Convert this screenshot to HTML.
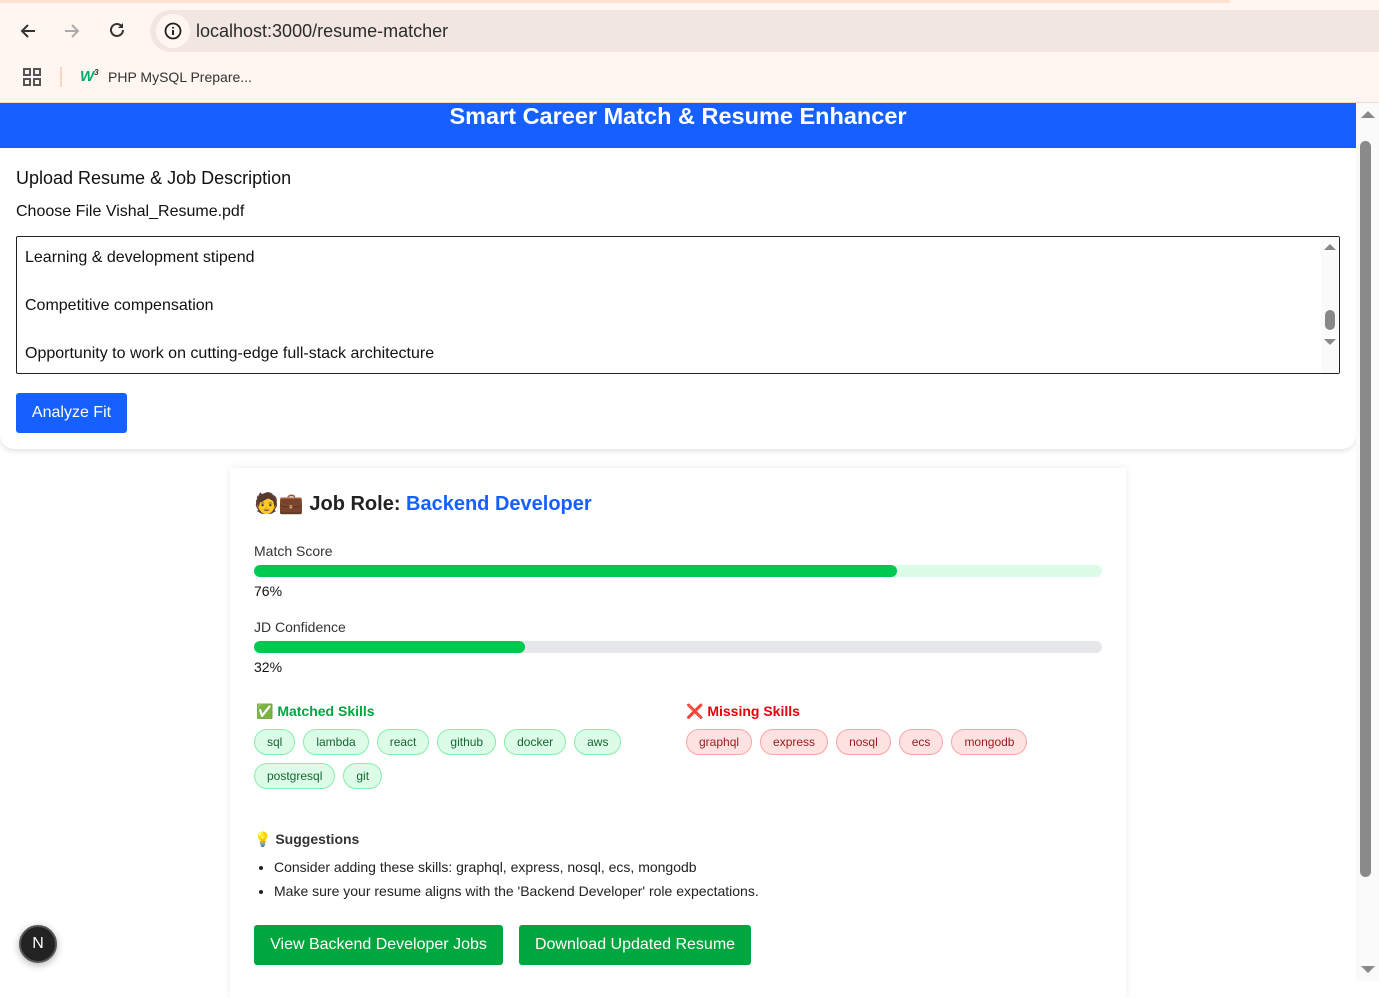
<!DOCTYPE html>
<html><head><style>
*{box-sizing:border-box;margin:0;padding:0}
body{width:1379px;height:981px;overflow:hidden;background:#fff;font-family:"Liberation Sans",Arial,sans-serif;position:relative;color:#111}
.chrome{position:absolute;left:0;top:0;width:1379px;height:103px;background:#fff6f2;border-bottom:1px solid #f5d9c8}
.topline{position:absolute;left:0;top:0;width:1230px;height:3px;background:#fde2d4}
.url{position:absolute;left:150px;top:10px;width:1229px;height:42px;background:#f2e6e2;border-radius:21px 0 0 21px}
.url .i{position:absolute;left:6px;top:4px;width:34px;height:34px;border-radius:50%;background:#fff6f2}
.url span{position:absolute;left:46px;top:11px;font-size:18px;color:#2b2b2b}
.hdr{position:absolute;left:0;top:103px;width:1356px;height:45px;background:#1660ff;color:#fff;font-weight:bold;font-size:23.5px;text-align:center;line-height:26px}
.up{position:absolute;left:0;top:148px;width:1356px;height:301px;background:#fff;border-radius:0 0 14px 14px;box-shadow:0 2px 6px rgba(0,0,0,.12)}
.ta{position:absolute;left:16px;top:88px;width:1324px;height:138px;border:1px solid #222;border-radius:2px;font-size:16px;padding:9px 8px;line-height:24px}
.btn{position:absolute;left:16px;top:245px;width:111px;height:40px;background:#1660ff;color:#fff;font-size:16px;border-radius:3px;text-align:center;line-height:40px}
.sb{position:absolute;left:1356px;top:103px;width:23px;height:878px;background:#fafafa}
.card{position:absolute;left:230px;top:468px;width:896px;height:530px;background:#fff;box-shadow:0 0 8px rgba(0,0,0,.08)}
.lbl{position:absolute;left:24px;font-size:14px;color:#333}
.bar{position:absolute;left:24px;width:848px;height:12px;border-radius:6px}
.bar div{height:12px;border-radius:6px;background:#00c950}
.chip{display:inline-block;height:26px;line-height:24px;padding:0 12px;border-radius:13px;font-size:12px;margin-right:8px;margin-bottom:8px}
.g{background:#dcfce7;border:1px solid #86efac;color:#166534}
.r{background:#fee2e2;border:1px solid #fca5a5;color:#991b1b}
.gb{position:absolute;top:457px;height:40px;background:#00a63e;color:#fff;font-size:16px;line-height:40px;text-align:center;border-radius:3px}
</style></head><body>
<div class="chrome"><div class="topline"></div>
<svg style="position:absolute;left:18px;top:21px" width="20" height="20" viewBox="0 0 20 20"><path d="M17 10H4M10 4L4 10l6 6" stroke="#333" stroke-width="2" fill="none"/></svg>
<svg style="position:absolute;left:62px;top:21px" width="20" height="20" viewBox="0 0 20 20"><path d="M3 10h13M10 4l6 6-6 6" stroke="#aaa" stroke-width="2" fill="none"/></svg>
<svg style="position:absolute;left:107px;top:20px" width="20" height="20" viewBox="0 0 20 20"><path d="M16 10a6 6 0 1 1-2-4.5" stroke="#333" stroke-width="2" fill="none"/><path d="M16 3v5h-5z" fill="#333"/></svg>
<div class="url"><div class="i"><svg style="position:absolute;left:8px;top:8px" width="18" height="18" viewBox="0 0 18 18"><circle cx="9" cy="9" r="7.5" stroke="#222" stroke-width="1.8" fill="none"/><path d="M9 8v5M9 5v1.5" stroke="#222" stroke-width="2"/></svg></div><span>localhost:3000/resume-matcher</span></div>
<svg style="position:absolute;left:23px;top:68px" width="19" height="19" viewBox="0 0 19 19" fill="none" stroke="#555" stroke-width="2"><rect x="1" y="1" width="6" height="6"/><rect x="11" y="1" width="6" height="6"/><rect x="1" y="11" width="6" height="6"/><rect x="11" y="11" width="6" height="6"/></svg>
<div style="position:absolute;left:60px;top:67px;width:2px;height:20px;background:#fbd5c0"></div>
<div style="position:absolute;left:80px;top:68px;font-weight:bold;color:#04aa6d;font-size:15px;font-style:italic">W<sup style="font-size:8px;color:#333">3</sup></div>
<div style="position:absolute;left:108px;top:69px;font-size:14px;color:#333">PHP MySQL Prepare...</div>
</div>
<div class="hdr">Smart Career Match &amp; Resume Enhancer</div>
<div class="up">
<div style="position:absolute;left:16px;top:20px;font-size:18px">Upload Resume &amp; Job Description</div>
<div style="position:absolute;left:16px;top:55px;font-size:16px">Choose File Vishal_Resume.pdf</div>
<div class="ta">Learning &amp; development stipend<br><br>Competitive compensation<br><br>Opportunity to work on cutting-edge full-stack architecture
<div style="position:absolute;right:0;top:0;width:18px;height:136px;background:#fafafa"><div style="position:absolute;left:3px;top:7px;border:6px solid transparent;border-bottom:6px solid #888;border-top:0;width:0"></div><div style="position:absolute;left:4px;top:73px;width:10px;height:20px;border-radius:5px;background:#888"></div><div style="position:absolute;left:3px;top:102px;border:6px solid transparent;border-top:6px solid #888;border-bottom:0;width:0"></div></div></div>
<div class="btn">Analyze Fit</div>
</div>
<div class="sb"><div style="position:absolute;left:5px;top:8px;border:7px solid transparent;border-bottom:7px solid #888;border-top:0"></div><div style="position:absolute;left:4px;top:38px;width:11px;height:736px;border-radius:6px;background:#8a8a8a"></div><div style="position:absolute;left:5px;top:863px;border:7px solid transparent;border-top:7px solid #888;border-bottom:0"></div></div>
<div class="card">
<div style="position:absolute;left:24px;top:23px;font-size:20px;font-weight:bold;color:#222">🧑💼 Job Role: <span style="color:#1660ff">Backend Developer</span></div>
<div class="lbl" style="top:75px">Match Score</div>
<div class="bar" style="top:97px;background:#dcfce7"><div style="width:643px"></div></div>
<div class="lbl" style="top:115px;color:#111">76%</div>
<div class="lbl" style="top:151px">JD Confidence</div>
<div class="bar" style="top:173px;background:#e5e7eb"><div style="width:271px"></div></div>
<div class="lbl" style="top:191px;color:#111">32%</div>
<div style="position:absolute;left:26px;top:235px;font-size:14px;font-weight:bold;color:#00a63e">✅ Matched Skills</div>
<div style="position:absolute;left:24px;top:261px;width:400px"><span class="chip g">sql</span><span class="chip g">lambda</span><span class="chip g">react</span><span class="chip g">github</span><span class="chip g">docker</span><span class="chip g">aws</span><span class="chip g">postgresql</span><span class="chip g">git</span></div>
<div style="position:absolute;left:456px;top:235px;font-size:14px;font-weight:bold;color:#e7000b">❌ Missing Skills</div>
<div style="position:absolute;left:456px;top:261px;width:420px"><span class="chip r">graphql</span><span class="chip r">express</span><span class="chip r">nosql</span><span class="chip r">ecs</span><span class="chip r">mongodb</span></div>
<div style="position:absolute;left:24px;top:363px;font-size:14px;font-weight:bold;color:#333">💡 Suggestions</div>
<ul style="position:absolute;left:44px;top:387px;font-size:14px;line-height:24px;color:#222"><li>Consider adding these skills: graphql, express, nosql, ecs, mongodb</li><li>Make sure your resume aligns with the 'Backend Developer' role expectations.</li></ul>
<div class="gb" style="left:24px;width:249px">View Backend Developer Jobs</div>
<div class="gb" style="left:289px;width:232px">Download Updated Resume</div>
</div>
<div style="position:absolute;left:19px;top:925px;width:38px;height:38px;border-radius:50%;background:#222;border:2px solid #555;color:#fff;text-align:center;line-height:34px;font-size:16px;box-shadow:0 2px 8px rgba(0,0,0,.3)">N</div>
</body></html>
